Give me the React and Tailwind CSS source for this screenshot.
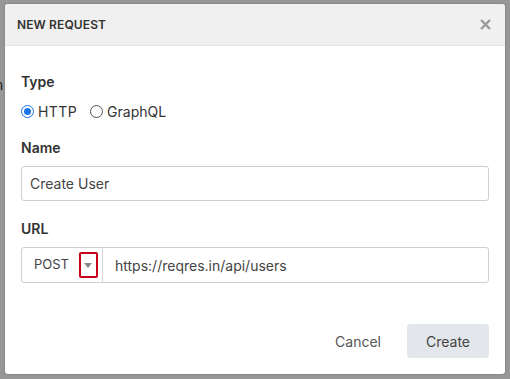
import React from 'react';

const font = { fontFamily: 'Inter, "Liberation Sans", sans-serif' };

const Label = ({ children }) => (
  <div className="text-[14px] leading-5 font-semibold text-[#333]">{children}</div>
);

export default function App() {
  return (
    <div className="relative w-[510px] h-[379px] bg-[#979797] overflow-hidden" style={font}>
      {/* page behind the backdrop */}
      <span className="absolute left-[-5px] top-[74px] text-[14px] text-[#222]">h</span>

      <div className="absolute left-[5px] top-[4px] w-[500px] h-[370px] bg-white rounded-[3px] flex flex-col shadow-[0_0_2px_rgba(0,0,0,0.3)]">
        <div className="h-[42px] bg-[#f0f0f0] border-b border-[#e6e6e6] rounded-t-[3px] flex items-center justify-between pl-3 pr-[14px]">
          <span className="text-[12px] font-semibold text-[#333] tracking-[0.01em]">NEW REQUEST</span>
          <svg width="11" height="11" viewBox="0 0 10 10" className="text-[#9a9a9a]">
            <path d="M1.5 1.5 L8.5 8.5 M8.5 1.5 L1.5 8.5" stroke="currentColor" strokeWidth="2" strokeLinecap="round" />
          </svg>
        </div>

        <div className="flex-1 flex flex-col px-4 pt-[26px]">
          <Label>Type</Label>
          <div className="flex items-center mt-[9px] h-5 text-[14px] text-[#333]">
            <span className="w-[13px] h-[13px] rounded-full border-[1.5px] border-[#1a73e8] flex items-center justify-center">
              <span className="w-[7px] h-[7px] rounded-full bg-[#1a73e8]" />
            </span>
            <span className="ml-[4px] tracking-[0.03em]">HTTP</span>
            <span className="ml-[13px] w-[13px] h-[13px] rounded-full border border-[#555]" />
            <span className="ml-[4px]">GraphQL</span>
          </div>

          <div className="mt-[17px]">
            <Label>Name</Label>
          </div>
          <div className="mt-[8px] h-[35px] border border-[#cfcfcf] rounded-[3px] flex items-center px-2 text-[14px] text-[#444]">
            Create User
          </div>

          <div className="mt-[18px]">
            <Label>URL</Label>
          </div>
          <div className="mt-[8px] h-[36px] border border-[#cfcfcf] rounded-[3px] flex items-stretch text-[#444]">
            <div className="flex items-center pl-3 pr-1 w-[81px] border-r border-[#d6d6d6]">
              <span className="text-[13px]">POST</span>
              <span className="ml-[10px] w-[19px] h-[26px] border-[2.5px] border-[#c8001a] rounded-[2px] flex items-center justify-center">
                <svg width="8" height="5" viewBox="0 0 8 5">
                  <path d="M0 0 H8 L4 5 Z" fill="#888" />
                </svg>
              </span>
            </div>
            <div className="flex items-center pl-3 text-[14px]">https://reqres.in/api/users</div>
          </div>

          <div className="mt-auto mb-[16px] flex items-center justify-end">
            <span className="text-[14px] text-[#555] mr-[26px]">Cancel</span>
            <button className="w-[82px] h-[34px] bg-[#e3e6ea] rounded-[3px] text-[14px] text-[#444]">
              Create
            </button>
          </div>
        </div>
      </div>
    </div>
  );
}
